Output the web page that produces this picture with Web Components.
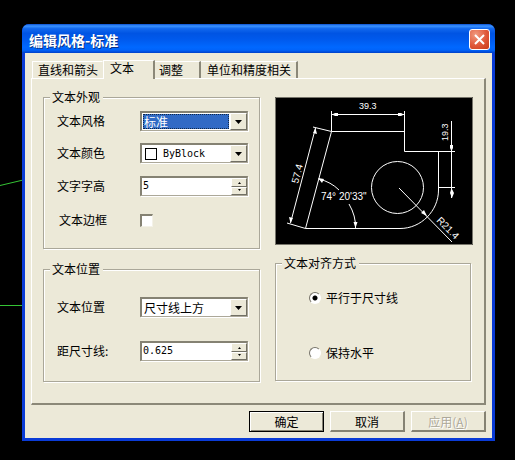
<!DOCTYPE html>
<html lang="zh-CN">
<head>
<meta charset="utf-8">
<title>编辑风格-标准</title>
<style>
html, body { margin: 0; min-height: 100%; background: #000; }
body { font: 12px/14px "Noto Sans CJK SC", sans-serif; color: #000; }
</style>
</head>
<body>
<cad-desktop>
  <style-dialog heading="编辑风格-标准">
    <tab-strip slot="tabs">
      <tab-item>直线和箭头</tab-item><tab-item selected>文本</tab-item><tab-item>调整</tab-item><tab-item>单位和精度相关</tab-item>
    </tab-strip>
    <tab-panel>
      <group-box slot="left" legend="文本外观">
        <combo-field label="文本风格" options="标准" active></combo-field>
        <combo-field label="文本颜色" options="ByBlock" swatch></combo-field>
        <spin-field class="tall" label="文字字高" value="5"></spin-field>
        <check-field class="tall" label="文本边框"></check-field>
      </group-box>
      <group-box slot="left" legend="文本位置" class="loose">
        <combo-field label="文本位置" options="尺寸线上方"></combo-field>
        <spin-field label="距尺寸线:" value="0.625"></spin-field>
      </group-box>
      <dimension-preview slot="right"></dimension-preview>
      <group-box slot="right" legend="文本对齐方式" class="radios">
        <radio-list options="平行于尺寸线,保持水平"></radio-list>
      </group-box>
    </tab-panel>
    <push-button slot="actions" default>确定</push-button>
    <push-button slot="actions">取消</push-button>
    <push-button slot="actions" disabled>应用(<u>A</u>)</push-button>
  </style-dialog>
</cad-desktop>

<script>
const define = (name, render) => customElements.define(name, class extends HTMLElement {
  constructor() { super(); this.attachShadow({ mode: "open" }); }
  connectedCallback() {
    this.shadowRoot.innerHTML = "<style>*{box-sizing:border-box}</style>" + render(this);
  }
});

define("cad-desktop", () => `
<style>
:host { display: block; position: relative; min-height: 100vh; padding: 24px 20px 18px 22px; box-sizing: border-box; background: #000; }
.drawing { position: absolute; left: 0; top: 0; z-index: 0; }
slot { position: relative; }
</style>
<svg class="drawing" width="40" height="320" stroke="#35c435" fill="none" aria-hidden="true"><path d="M0 185.5L40 176M0 305.5H40"/></svg>
<slot></slot>`);

define("style-dialog", el => `
<style>
:host { display: block; position: relative; border-radius: 7px 7px 0 0; background: #0a3bd6; }
header { display: flex; align-items: center; justify-content: space-between; height: 29px; padding: 2px 5px 0 7px; border-radius: 7px 7px 0 0;
  background: linear-gradient(#0a50d0 0, #3b93ff 7%, #1268ee 16%, #0054e3 32%, #0059ec 52%, #0068ff 80%, #0063fa 90%, #0040c8 100%); }
h1 { margin: 0; font-size: 14px; line-height: 20px; font-weight: 700; color: #fff; text-shadow: 1px 1px #0a3287; }
.close { width: 21px; height: 21px; padding: 0; border: 1px solid #fff; border-radius: 3px; background: radial-gradient(circle at 30% 25%, #f09a80, #e0583a 55%, #c83a18); display: grid; place-items: center; }
.body { margin: 0 3px; padding: 7px 6px 6px; background: #ece9d8; }
main { display: block; }
footer { display: flex; justify-content: flex-end; gap: 6px; margin-top: 6px; }
.edge { height: 3px; }
</style>
<header><h1>${el.getAttribute("heading")}</h1>
<button class="close" aria-label="关闭"><svg width="13" height="13" stroke="#fff" stroke-width="2" fill="none"><path d="M2 2L11 11M11 2L2 11"/></svg></button></header>
<div class="body"><slot name="tabs"></slot><main><slot></slot></main><footer><slot name="actions"></slot></footer></div>
<div class="edge"></div>`);

define("tab-strip", () => `
<style>
:host { display: flex; align-items: flex-end; height: 18px; }
</style><slot></slot>`);

define("tab-item", el => `
<style>
:host { display: block; }
button { display: block; height: 17px; padding: 0 5px 0 6px; border: 0; border-top: 1px solid #fff; border-right: 1px solid #ece9d8; background: #ece9d8; font: inherit; line-height: 16px; color: #000; white-space: nowrap; }
:host(:first-child) button { border-left: 1px solid #fff; padding: 0 4px 0 5px; margin-left: 1px; }
:host(:not(:first-child)) button { border-right: 2px solid #8b8878; }
:host([selected]) button { height: 19px; margin-bottom: -1px; border-left: 1px solid #fff; padding: 0 19px 4px 6px; line-height: 14px; position: relative; z-index: 1; }
:host(:nth-child(3)) button { padding: 0 16px 0 4px; }
</style><button role="tab" aria-selected="${el.hasAttribute("selected")}"><slot></slot></button>`);

define("tab-panel", () => `
<style>
:host { display: grid; grid-template-columns: 217fr 198fr; gap: 15px; padding: 11px 11px 21px 11px; border: 1px solid #fff; border-right: 2px solid #8b8878; border-bottom: 2px solid #8b8878; }
.col { display: flex; flex-direction: column; gap: 13px; min-width: 0; }
.right { padding-top: 7px; gap: 11px; }
</style>
<div class="col"><slot name="left"></slot></div><div class="col right"><slot name="right"></slot></div>`);

define("group-box", el => `
<style>
:host { display: block; }
:host(.radios) { margin-right: 2px; }
fieldset { margin: 0; padding: 1px 11px 11px 13px; min-width: 0; border: 1px solid #aaa799; box-shadow: 1px 1px #fff, inset 1px 1px #fff; }
legend { margin-left: -7px; padding: 0 3px 0 2px; background: #ece9d8; height: 14px; line-height: 14px; }
::slotted(*) { height: 32px; }
::slotted(.tall) { height: 34px; }
:host(.loose) fieldset { padding: 9px 11px 8px 13px; }
:host(.loose) ::slotted(*) { height: 44px; }
:host(.radios) fieldset { padding: 0 11px 0 13px; }
:host(.radios) ::slotted(*) { height: auto; }
</style><fieldset><legend>${el.getAttribute("legend")}</legend><slot></slot></fieldset>`);

const row = `
:host { display: grid; grid-template-columns: 83px 1fr; align-items: center; }
.box { border: 1px solid #aca899; border-top: 2px solid #858273; border-left: 2px solid #858273; background: #fff; height: 20px; min-width: 0; box-shadow: 1px 1px #fff; }
.raised { background: #ece9d8; border: 1px solid #fff; border-right-color: #716f64; border-bottom-color: #716f64; }
`;

define("combo-field", el => `
<style>${row}
.box { display: grid; grid-template-columns: auto 1fr 17px; align-items: center; }
select { grid-area: 1 / 2 / 2 / 4; width: 100%; height: 17px; margin: 0; padding: 0 20px 0 2px; border: 0; border-radius: 0; outline: 0; appearance: none; background: none; font: inherit; line-height: 17px; color: #000; }
.arrow { grid-area: 1 / 3; height: 17px; display: grid; place-items: center; pointer-events: none; }
.swatch { width: 12px; height: 12px; border: 1px solid #000; margin: 0 4px 0 3px; }
:host([swatch]) select { font: 10px/17px "DejaVu Sans Mono", monospace; }
.hl { grid-area: 1 / 1 / 2 / 3; height: 15px; margin: 0 1px; background: #316ac5; border: 1px dotted #102848; }
:host([active]) select { color: #fff; position: relative; grid-column: 1 / 4; }
:host([active]) .arrow { position: relative; }
</style>
<label for="c">${el.getAttribute("label")}</label>
<div class="box">${el.hasAttribute("swatch") ? '<span class="swatch"></span>' : ""}${el.hasAttribute("active") ? '<span class="hl"></span>' : ""}
<select id="c">${el.getAttribute("options").split(",").map(o => `<option>${o}</option>`).join("")}</select>
<span class="arrow raised"><svg width="7" height="4"><path d="M0 0H7L3.5 4Z"/></svg></span></div>`);

define("spin-field", el => `
<style>${row}
.box { display: grid; grid-template-columns: 1fr 16px; }
input { width: 100%; min-width: 0; height: 15px; margin: 0; padding: 0 1px; border: 0; outline: 0; background: none; font: 10px/15px "DejaVu Sans Mono", monospace; color: #000; }
.steps { display: grid; grid-template-rows: 1fr 1fr; height: 17px; }
button { padding: 0; display: grid; place-items: center; min-height: 0; }
svg { display: block; }
</style>
<label for="s">${el.getAttribute("label")}</label>
<div class="box"><input id="s" type="text" inputmode="decimal" value="${el.getAttribute("value")}">
<span class="steps"><button class="raised" aria-label="增加"><svg width="5" height="3"><path d="M1 3H4L2.5 1Z"/></svg></button><button class="raised" aria-label="减少"><svg width="5" height="3"><path d="M1 0H4L2.5 2Z"/></svg></button></span></div>`);

define("check-field", el => `
<style>${row}
label { padding-left: 2px; }
input { appearance: none; width: 13px; height: 13px; margin: 0; background: #fff; border: 1px solid #f4f2e8; border-top: 2px solid #858273; border-left: 2px solid #858273; }
</style><label for="k">${el.getAttribute("label")}</label><input id="k" type="checkbox">`);

define("radio-list", el => `
<style>
:host { display: block; padding-left: 20px; }
.option { display: flex; align-items: center; gap: 5px; height: 55px; }
input { appearance: none; width: 12px; height: 12px; margin: 0; border-radius: 50%; border: 1px solid; border-color: #77746a #fff #fff #77746a; background: #fff; }
input:checked { background: radial-gradient(circle, #000 0 2px, #fff 3px); }
</style>
${el.getAttribute("options").split(",").map((o, i) => `<div class="option"><input type="radio" name="align" id="r${i}"${i ? "" : " checked"}><label for="r${i}">${o}</label></div>`).join("")}`);

define("push-button", el => `
<style>
:host { display: block; width: 75px; }
button { width: 100%; height: 21px; padding: 0; font: inherit; line-height: 17px; color: #000; background: #ece9d8; border: 1px solid #fff; border-right: 2px solid #858273; border-bottom: 2px solid #858273; }
:host([default]) button { border: 1px solid #000; box-shadow: inset 1px 1px #fff, inset -1px -1px #858273; }
:host([disabled]) button { color: #aca899; text-shadow: 1px 1px #fff; }
</style><button type="button"${el.hasAttribute("disabled") ? " disabled" : ""}><slot></slot></button>`);

define("dimension-preview", () => `
<style>
:host { display: block; }
svg { display: block; width: 100%; height: auto; background: #000; }
text { font-family: "Liberation Sans", sans-serif; font-size: 9px; fill: #fff; }
.large { font-size: 10px; }
</style>
<svg viewBox="275 97 198 148" role="img" aria-label="标注预览">
<path d="M275.5 245V97.5H472.5V244.5H275.5" fill="none" stroke="#77756b"/>
<g fill="none" stroke="#fff">
<path d="M331.5 111V131.5H404.5M404.5 111V151.5H455M438.5 151V190C438.5 211 421 228.5 400 228.5H305.5L331.5 131.5L313 127M305.5 228.5L287 223M315.5 128L290.5 223M331 114.5H404M451.5 121V198M438 187.5H455M399 188L452 242"/>
<circle cx="397.5" cy="187.5" r="26"/>
<path d="M319 179Q331 182 339 190M349 204Q356 216 355.5 228"/>
</g>
<g fill="#fff"><path d="M332 114.5L335 113H338V116H335ZM404 114.5L401 116H398V113H401ZM451.5 151L450 148V145H453V148ZM451.5 188L454 193L452 198L450 193ZM315.5 128L317 134L313 133ZM290.5 223L289 217L293 218ZM318 178L324 179L322 183ZM355.5 228L353.5 222H357.5ZM427 216L421 213L424 210Z"/></g>
<text x="359" y="109">39.3</text>
<text transform="translate(448 141) rotate(-90)">19.3</text>
<text class="large" transform="translate(298 184) rotate(-75)">57.4</text>
<text class="large" x="321" y="200">74° 20'33"</text>
<text class="large" transform="translate(436 221) rotate(45)">R21.4</text>
</svg>`);
</script>
</body>
</html>
